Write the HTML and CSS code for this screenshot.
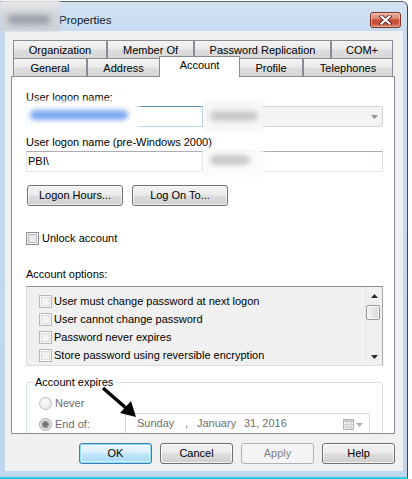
FILE: index.html
```html
<!DOCTYPE html>
<html>
<head>
<meta charset="utf-8">
<title>Properties</title>
<link rel="stylesheet" href="styles.css">
</head>
<body>
<div class="window">
  <div class="titlebar">
    <span class="title">Properties</span>
    <div class="close-btn">
      <svg width="13" height="10" viewBox="0 0 13 10">
        <path d="M2.5 1.5 L10.5 8.5 M10.5 1.5 L2.5 8.5" stroke="#5a2a22" stroke-width="4" stroke-linecap="square"/>
        <path d="M2.5 1.5 L10.5 8.5 M10.5 1.5 L2.5 8.5" stroke="#ffffff" stroke-width="2.2" stroke-linecap="square"/>
      </svg>
    </div>
  </div>

  <div class="client">
    <div class="tabstrip">
      <div class="tabrow">
        <div class="tab t-org">Organization</div>
        <div class="tab t-mem">Member Of</div>
        <div class="tab t-pwd">Password Replication</div>
        <div class="tab t-com">COM+</div>
      </div>
      <div class="tabrow">
        <div class="tab t-gen">General</div>
        <div class="tab t-adr">Address</div>
        <div class="tab t-acc active">Account</div>
        <div class="tab t-pro">Profile</div>
        <div class="tab t-tel">Telephones</div>
      </div>
    </div>

    <div class="panel">
      <div class="lbl first">User logon name:</div>
      <div class="field-row">
        <div class="textbox focused"></div>
        <div class="combo">
          <svg class="combo-arrow" width="7" height="4" viewBox="0 0 7 4"><polygon points="0,0 7,0 3.5,4" fill="#909090"/></svg>
        </div>
      </div>

      <div class="lbl second">User logon name (pre-Windows 2000)</div>
      <div class="field-row">
        <div class="textbox">PBI\</div>
        <div class="textbox"></div>
      </div>

      <div class="btn-row">
        <div class="btn wide">Logon Hours...</div>
        <div class="btn wide">Log On To...</div>
      </div>

      <div class="check-row unlock">
        <span class="checkbox"></span>
        <span class="check-text">Unlock account</span>
      </div>

      <div class="lbl opts">Account options:</div>
      <div class="listbox">
        <ul class="list-items">
          <li><span class="checkbox light"></span>User must change password at next logon</li>
          <li><span class="checkbox light"></span>User cannot change password</li>
          <li><span class="checkbox light"></span>Password never expires</li>
          <li><span class="checkbox light"></span>Store password using reversible encryption</li>
        </ul>
        <div class="vscroll">
          <div class="sb-btn">
            <svg width="7" height="4" viewBox="0 0 7 4"><polygon points="3.5,0 7,4 0,4" fill="#2a2a2a"/></svg>
          </div>
          <div class="sb-thumb"></div>
          <div class="sb-track"></div>
          <div class="sb-btn">
            <svg width="7" height="4" viewBox="0 0 7 4"><polygon points="0,0 7,0 3.5,4" fill="#2a2a2a"/></svg>
          </div>
        </div>
      </div>

      <fieldset class="group">
        <legend>Account expires</legend>
        <div class="radio-row never">
          <span class="radio"></span>
          <span class="dim">Never</span>
        </div>
        <div class="radio-row endof">
          <span class="radio checked"></span>
          <span class="dim end-lbl">End of:</span>
          <div class="datepicker">
            <span class="d1">Sunday</span>
            <span class="d2">,</span>
            <span class="d3">January</span>
            <span class="d4">31, 2016</span>
            <svg class="cal" width="11" height="11" viewBox="0 0 11 11">
              <rect x="0.5" y="0.5" width="10" height="10" fill="#f4f4f4" stroke="#b4b4b4"/>
              <rect x="1" y="1" width="9" height="2" fill="#c8c8c8"/>
              <path d="M1 5.5H10M1 8H10M3.5 3V10M6 3V10M8.5 3V10" stroke="#cdcdcd" stroke-width="1"/>
            </svg>
            <svg class="dp-arrow" width="7" height="4" viewBox="0 0 7 4"><polygon points="0,0 7,0 3.5,4" fill="#b0b0b0"/></svg>
          </div>
        </div>
      </fieldset>

      <div class="blur-patch p1"><span class="blob blue"></span></div>
      <div class="blur-patch p2"><span class="blob gray"></span></div>
      <div class="blur-patch p3"><span class="blob gray"></span></div>

      <svg class="annot-arrow" width="140" height="345" viewBox="0 0 140 345">
        <line x1="91" y1="311" x2="114" y2="331" stroke="#000" stroke-width="3.5"/>
        <polygon points="124,340 108,336 119,324" fill="#000"/>
      </svg>
    </div>

    <div class="dlg-buttons">
      <div class="btn dbtn default">OK</div>
      <div class="btn dbtn">Cancel</div>
      <div class="btn dbtn disabled">Apply</div>
      <div class="btn dbtn">Help</div>
    </div>
  </div>

  <div class="title-blur"><span class="tblob"></span></div>
</div>
</body>
</html>
```

FILE: styles.css
```css
* { box-sizing: border-box; }

html, body {
  margin: 0;
  padding: 0;
}

body {
  width: 412px;
  height: 479px;
  overflow: hidden;
  padding-top: 1px;
  background: #ffffff;
  font-family: "Liberation Sans", Arial, sans-serif;
  font-size: 11px;
  line-height: 13px;
  color: #000;
}

.window {
  position: relative;
  width: 408px;
  height: 478px;
  display: flex;
  flex-direction: column;
  padding: 0 4px 6px 5px;
  background: linear-gradient(#d2e2f3, #c4d9ef 40px, #c0d6ec);
  border-top: 1px solid #59636e;
  border-right: 1px solid #3f4852;
  border-bottom: 2px solid #2cc5e6;
  border-top-right-radius: 6px;
}

/* ---------- title bar ---------- */
.titlebar {
  height: 29px;
  flex: none;
  display: flex;
  align-items: flex-start;
}

.title {
  margin: 11px 0 0 54px;
  font-size: 11.5px;
  line-height: 15px;
  color: #141821;
}

.close-btn {
  margin: 10px 2px 0 auto;
  width: 31px;
  height: 16px;
  border: 1px solid #7c3326;
  border-radius: 3px;
  background: linear-gradient(#eab1a4 0%, #dc8370 42%, #c84a33 50%, #c9513a 75%, #dc8a6c 100%);
  box-shadow: inset 0 0 0 1px rgba(255, 220, 210, 0.45);
  display: flex;
  align-items: center;
  justify-content: center;
}

.title-blur {
  position: absolute;
  left: 0;
  top: -2px;
  width: 60px;
  height: 31px;
  background: linear-gradient(#ececec, #d4d7db 40%, #cdd1d6);
  filter: blur(1.5px);
}

.tblob {
  position: absolute;
  left: 8px;
  top: 15px;
  width: 42px;
  height: 9px;
  border-radius: 4px;
  background: #9a9fa6;
  filter: blur(2.5px);
}

/* ---------- client ---------- */
.client {
  width: 398px;
  height: 440px;
  flex: none;
  background: #f0f0f0;
  padding: 9px 8px 7px 6px;
  display: flex;
  flex-direction: column;
}

.tabstrip {
  margin-left: 2px;
  display: flex;
  flex-direction: column;
}

.tabrow {
  display: flex;
  height: 18px;
}

.tab {
  height: 18px;
  border: 1px solid #898c95;
  border-bottom: none;
  background: linear-gradient(#f4f4f4 0%, #ebebeb 48%, #dddddd 52%, #d7d7d7 100%);
  display: flex;
  justify-content: center;
  align-items: center;
  padding-top: 1px;
  white-space: nowrap;
}

.t-org { width: 94px; }
.t-mem { width: 87px; }
.t-pwd { width: 137px; }
.t-com { width: 62px; }
.t-gen { width: 74px; }
.t-adr { width: 73px; }
.t-acc { width: 79px; }
.t-pro { width: 64px; }
.t-tel { width: 90px; }

.tab.active {
  position: relative;
  z-index: 2;
  width: 81px;
  height: 21px;
  margin: -2px -1px -1px -1px;
  background: #ffffff;
  align-items: flex-start;
  padding-top: 2px;
}

/* ---------- panel ---------- */
.panel {
  position: relative;
  width: 384px;
  height: 358px;
  flex: none;
  border: 1px solid #898c95;
  background: #ffffff;
  padding: 14px 11px 0 14px;
  overflow: hidden;
}

.lbl { height: 13px; white-space: nowrap; }
.lbl.second { margin-top: 9px; }
.lbl.opts { margin-top: 23px; }

.field-row {
  margin-top: 2px;
  height: 21px;
  display: flex;
  gap: 4px;
}

.textbox {
  width: 177px;
  height: 21px;
  border: 1px solid;
  border-color: #abadb3 #dbdfe6 #e3e9ef #e2e3ea;
  background: #fff;
  display: flex;
  align-items: center;
  padding: 0 1px;
}

.field-row .textbox:last-child { width: 176px; }

.textbox.focused {
  border-color: #5b8fba #a9c8e4 #b7d3ec #a9c8e4;
}

.combo {
  width: 176px;
  height: 21px;
  border: 1px solid #d3d3d3;
  border-radius: 2px;
  background: #f3f3f3;
  display: flex;
  align-items: center;
  justify-content: flex-end;
  padding-right: 4px;
}

.btn-row {
  margin-top: 13px;
  margin-left: 1px;
  display: flex;
  gap: 9px;
}

.btn {
  height: 21px;
  border: 1px solid #707070;
  border-radius: 3px;
  background: linear-gradient(#f2f2f2 0%, #ebebeb 48%, #dddddd 52%, #cfcfcf 100%);
  box-shadow: inset 0 0 0 1px rgba(255, 255, 255, 0.7);
  display: flex;
  align-items: center;
  justify-content: center;
  white-space: nowrap;
}

.btn.wide { width: 96px; }

.check-row {
  margin-top: 26px;
  height: 13px;
  display: flex;
  align-items: center;
  gap: 3px;
}

.checkbox {
  width: 13px;
  height: 13px;
  flex: none;
  border: 1px solid #8e8f8f;
  background: linear-gradient(135deg, #dcdcdc, #f8f8f8);
  box-shadow: inset 0 0 0 1px #f4f4f4, inset 0 0 0 2px #b9bcc0;
}

.checkbox.light {
  border-color: #b8b8b8;
  background: linear-gradient(135deg, #ebebeb, #fafafa);
  box-shadow: inset 0 0 0 1px #f8f8f8, inset 0 0 0 2px #dcdcdc;
}

/* list box */
.listbox {
  margin-top: 5px;
  width: 357px;
  height: 80px;
  border: 1px solid;
  border-color: #8c8c8c #a9a9a9 #dcdcdc #dcdcdc;
  background: #f0f0f0;
  display: flex;
}

.list-items {
  flex: 1;
  list-style: none;
  margin: 0;
  padding: 5px 0 0 12px;
}

.list-items li {
  height: 18px;
  display: flex;
  align-items: center;
  gap: 2px;
  white-space: nowrap;
}

.vscroll {
  width: 17px;
  flex: none;
  border-left: 1px solid #e6e6e6;
  background: #f0f0f0;
  display: flex;
  flex-direction: column;
}

.sb-btn {
  height: 17px;
  display: flex;
  align-items: center;
  justify-content: center;
  padding-left: 1px;
}

.sb-thumb {
  margin-top: 1px;
  width: 14px;
  height: 15px;
  border: 1px solid #979797;
  border-radius: 2px;
  background: linear-gradient(90deg, #f6f6f6, #e6e6e6 50%, #dadada);
  box-shadow: inset 0 0 0 1px #fbfbfb;
}

.sb-track { flex: 1; }

/* group box */
.group {
  margin: 10px 0 0 0;
  padding: 0 0 0 6px;
  width: 357px;
  height: 72px;
  border: 1px solid #d5dfe5;
  border-radius: 3px;
  min-width: 0;
}

.group legend {
  padding: 0 2px;
  line-height: 13px;
}

.radio-row {
  display: flex;
  align-items: flex-start;
}

.radio-row.never { margin: 8px 0 0 6px; height: 13px; }
.radio-row.endof { margin: 3px 0 0 6px; }

.radio {
  width: 13px;
  height: 13px;
  flex: none;
  border-radius: 50%;
  border: 1px solid #bcbcbc;
  background: radial-gradient(circle at 45% 40%, #fafafa, #e4e4e4);
}

.radio-row.endof .radio { margin-top: 5px; }

.radio.checked {
  border-color: #a5a5a5;
  background: radial-gradient(circle, #767676 0 2px, #9a9a9a 3px, #c4c4c4 4px, #eeeeee 5px);
}

.dim {
  color: #6d6d6d;
  margin-left: 3px;
  line-height: 13px;
}

.end-lbl {
  width: 70px;
  margin-top: 5px;
}

.datepicker {
  width: 245px;
  height: 24px;
  border: 1px solid #dadada;
  background: #ffffff;
  color: #6d6d6d;
  display: flex;
  align-items: flex-start;
  padding: 3px 6px 0 11px;
  white-space: nowrap;
}

.d1 { width: 48px; }
.d2 { width: 12px; }
.d3 { width: 47px; }
.d4 { width: 60px; }

.cal { margin: 2px 0 0 auto; }
.dp-arrow { margin: 6px 0 0 2px; }

/* blurred areas */
.blur-patch {
  position: absolute;
  filter: blur(2px);
}

.blur-patch.p1 {
  left: 12px; top: 24px; width: 115px; height: 29px;
  background: #ffffff;
}

.blur-patch.p2 {
  left: 192px; top: 23px; width: 59px; height: 31px;
  background: #f6f6f6;
}

.blur-patch.p3 {
  left: 192px; top: 71px; width: 59px; height: 29px;
  background: #fbfbfb;
}

.blob {
  position: absolute;
  left: 6px;
  height: 10px;
  border-radius: 5px;
  filter: blur(1.5px);
}

.blob.blue {
  top: 9px;
  width: 98px;
  background: #7aa8f2;
}

.p2 .blob.gray { top: 11px; width: 48px; background: #c8c8c8; }
.p3 .blob.gray { top: 7px; width: 40px; background: #cacaca; }

.annot-arrow {
  position: absolute;
  left: 0;
  top: 0;
}

/* dialog buttons */
.dlg-buttons {
  margin-top: 9px;
  display: flex;
  justify-content: flex-end;
  gap: 8px;
}

.dbtn { width: 73px; }

.dbtn.default {
  border-color: #3c7fb1;
  background: linear-gradient(#eaf6fd 0%, #d9f0fc 48%, #bee6fd 52%, #a7d9f5 100%);
  box-shadow: inset 0 0 0 1px #8fdcf7, inset 0 0 0 2px rgba(255, 255, 255, 0.5);
}

.dbtn.disabled {
  border-color: #adb2b5;
  background: #f4f4f4;
  box-shadow: none;
  color: #838383;
}
```
